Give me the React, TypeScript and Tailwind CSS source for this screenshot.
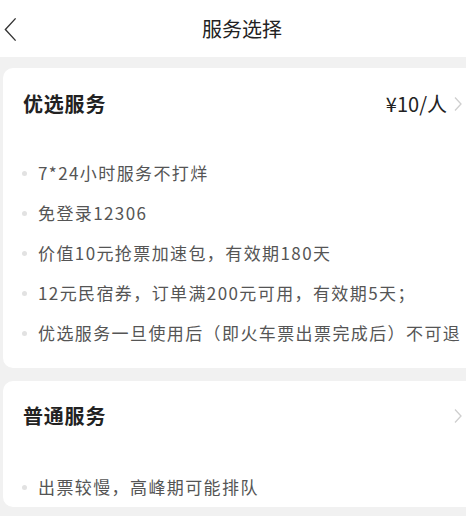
import React from "react";

const font = { fontFamily: '"Noto Sans CJK SC", "Noto Sans", sans-serif' };

const Chevron = ({ className }: { className?: string }) => (
  <svg viewBox="0 0 8 16" className={className} fill="none" stroke="currentColor" strokeWidth="1.3">
    <path d="M1 1.5 L7 8 L1 14.5" />
  </svg>
);

type CardProps = {
  title: string;
  price?: string;
  items: string[];
  headH: string;
  listPad: string;
};

const ServiceCard: React.FC<CardProps> = ({ title, price, items, headH, listPad }) => {
  return (
    <div className="ml-[3px] bg-white rounded-l-[10px] overflow-hidden">
      <div className={`${headH} flex items-center pl-[20px] pr-[4px]`}>
        <h3 className="text-[20px] font-bold text-[#222] flex-grow tracking-[0.8px]">{title}</h3>
        {price && <span className="text-[20px] text-[#222] mr-[7px]">{price}</span>}
        <Chevron className="w-[8px] h-[16px] text-[#cfcfcf]" />
      </div>
      <ul className={listPad}>
        {items.map((t) => (
          <li key={t} className="h-[40px] flex items-center pl-[19px] whitespace-nowrap">
            <span className="w-[5px] h-[5px] rounded-full bg-[#e2e2e2] mr-[11px] flex-shrink-0" />
            <span className="text-[17px] text-[#555] tracking-[1.4px]">{t}</span>
          </li>
        ))}
      </ul>
    </div>
  );
};

export default function App() {
  return (
    <div className="w-[466px] h-[516px] overflow-hidden bg-[#f1f1f1]" style={font}>
      <div className="h-[57px] bg-white relative flex items-center justify-center pl-[18px]">
        <svg viewBox="0 0 14 26" className="absolute left-[4px] top-[17px] w-[13px] h-[25px]" fill="none" stroke="#333" strokeWidth="1.5">
          <path d="M12.5 1 L1.5 13 L12.5 25" />
        </svg>
        <h1 className="text-[20px] text-[#222]">服务选择</h1>
      </div>
      <div className="h-[11px]" />
      <ServiceCard
        title="优选服务"
        price="¥10/人"
        headH="h-[72px]"
        listPad="pt-[13px] pb-[15px]"
        items={[
          "7*24小时服务不打烊",
          "免登录12306",
          "价值10元抢票加速包，有效期180天",
          "12元民宿券，订单满200元可用，有效期5天；",
          "优选服务一旦使用后（即火车票出票完成后）不可退",
        ]}
      />
      <div className="h-[13px]" />
      <ServiceCard
        title="普通服务"
        headH="h-[70px]"
        listPad="pt-[16px]"
        items={["出票较慢，高峰期可能排队"]}
      />
    </div>
  );
}
